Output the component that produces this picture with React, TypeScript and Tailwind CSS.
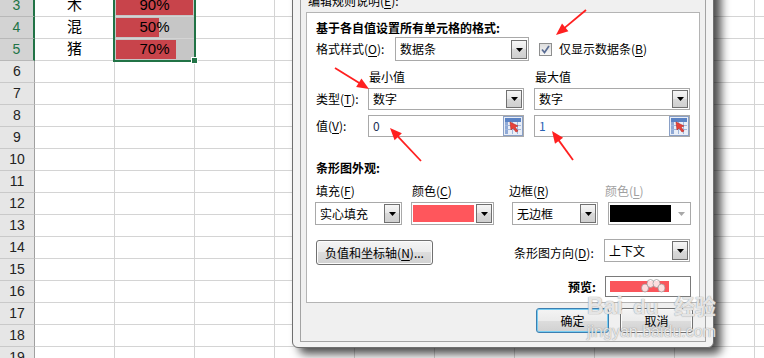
import React from 'react';

type Row = { name?: string; pct?: string; bar?: number };

const data: Record<number, Row> = {
  3: { name: '木', pct: '90%', bar: 77 },
  4: { name: '混', pct: '50%', bar: 43 },
  5: { name: '猪', pct: '70%', bar: 60 },
};

const rowNums = Array.from({ length: 17 }, (_, i) => i + 3);
const emptyCols = Array.from({ length: 8 }, (_, i) => i);

function Sheet() {
  return (
    <div className="flex flex-col -mt-[5px] font-['Liberation_Sans','Noto_Sans_CJK_SC',sans-serif]">
      {rowNums.map((r) => {
        const sel = r >= 3 && r <= 5;
        const d = data[r];
        return (
          <div key={r} className="flex h-[22px] shrink-0">
            <div
              className={`w-[35px] shrink-0 flex items-center justify-center border-b text-[14px] ${
                sel
                  ? 'bg-[#d3d3d3] text-[#217346] border-b-[#b8b8b8] border-r-2 border-r-[#217346]'
                  : 'bg-[#e6e6e6] text-[#222] border-b-[#c9c9c9] border-r border-r-[#a0a0a0]'
              }`}
            >
              {r}
            </div>
            <div className="w-[80px] shrink-0 border-r border-b border-[#d4d4d4] flex items-center justify-center text-[15px] text-black">
              {d?.name}
            </div>
            <div
              className={`relative w-[80px] shrink-0 border-r border-b border-[#d4d4d4] flex items-center justify-center text-[15px] text-black ${
                sel ? 'bg-[#c6c6c6]' : ''
              }`}
            >
              {d?.bar && (
                <div className="absolute left-[1px] top-[1px] bottom-[1px] bg-[#c8444b]" style={{ width: d.bar }} />
              )}
              {d?.pct && <span className="relative">{d.pct}</span>}
            </div>
            {emptyCols.map((c) => (
              <div key={c} className="w-[80px] shrink-0 border-r border-b border-[#d4d4d4]" />
            ))}
          </div>
        );
      })}
    </div>
  );
}

function Tri({ color = '#000' }: { color?: string }) {
  return (
    <svg width="7" height="4" viewBox="0 0 7 4">
      <polygon points="0,0 7,0 3.5,4" fill={color} />
    </svg>
  );
}

function DropBtn({ className }: { className: string }) {
  return (
    <div
      className={`shrink-0 flex items-center justify-center border border-[#707070] bg-[linear-gradient(#f6f6f6,#e6e6e6_50%,#d9d9d9_50%,#cfcfcf)] ${className}`}
    >
      <Tri />
    </div>
  );
}

function Combo({ className, text, btn }: { className: string; text: string; btn: string }) {
  return (
    <div className={`flex items-center justify-between border border-[#a9a9a9] bg-white pl-[4px] pr-[1px] ${className}`}>
      <span className="text-[12px] leading-none">{text}</span>
      <DropBtn className={btn} />
    </div>
  );
}

function RefEdit() {
  return (
    <svg width="20" height="20" viewBox="0 0 20 20">
      <rect x="0.5" y="0.5" width="19" height="19" fill="#e9eef7" stroke="#8aa0c6" />
      <rect x="2" y="2" width="16" height="4" fill="#5a82c4" />
      <rect x="2" y="6" width="3" height="12" fill="#8fa9d6" />
      <line x1="2" y1="9.5" x2="18" y2="9.5" stroke="#9fb6dc" />
      <line x1="2" y1="13.5" x2="18" y2="13.5" stroke="#9fb6dc" />
      <line x1="9.5" y1="6" x2="9.5" y2="18" stroke="#9fb6dc" />
      <line x1="14.5" y1="6" x2="14.5" y2="18" stroke="#9fb6dc" />
      <polygon points="7,6 15,10 12,11 15,15 13,16 10,12 8,14" fill="#e8413a" stroke="#b52a22" strokeWidth="0.6" />
    </svg>
  );
}

function ValueBox({ value, color }: { value: string; color: string }) {
  return (
    <div className="w-[156px] h-[22px] flex items-center justify-between border border-[#a9a9a9] bg-white pl-[4px] pr-[0px]">
      <span className={`text-[12px] leading-none ${color}`}>{value}</span>
      <RefEdit />
    </div>
  );
}

function U({ children }: { children: React.ReactNode }) {
  return <span className="underline underline-offset-[2px]">{children}</span>;
}

function WinBtn({ children, primary, className }: { children: React.ReactNode; primary?: boolean; className: string }) {
  return (
    <div
      className={`flex items-center justify-center rounded-[3px] border text-[12px] text-black bg-[linear-gradient(#f4f4f4,#ebebeb_50%,#dddddd_50%,#d1d1d1)] ${
        primary ? 'border-[#3c7fb1] shadow-[inset_0_0_0_1px_#78cdf2]' : 'border-[#707070] shadow-[inset_0_0_0_1px_#fcfcfc]'
      } ${className}`}
    >
      {children}
    </div>
  );
}

function Dialog() {
  return (
    <div className="absolute left-[292px] top-[-20px] w-[422px] h-[368px] flex flex-col border border-[#6f6f6f] rounded-b-[6px] bg-[#f3f3f3] px-[7px] pt-[7px] pb-[5px] shadow-[7px_6px_10px_rgba(0,0,0,0.7)] font-['Noto_Sans_CJK_SC','Liberation_Sans',sans-serif] text-black">
      <div className="flex-1 flex flex-col border border-[#a3a3a3] bg-[#f0f0f0]">
        <div className="mt-[4px] pl-[7px] h-[16px] leading-[16px] text-[12px]">
          编辑规则说明(<U>E</U>):
        </div>
        <div className="mt-[3px] mx-[5px] h-[291px] border border-[#b4b4b4] bg-white pl-[9px] flex flex-col text-[12px]">
          <div className="mt-[7px] h-[16px] leading-[16px] font-bold">基于各自值设置所有单元格的格式:</div>

          <div className="mt-[1px] h-[24px] flex items-center">
            <span className="w-[79px] shrink-0">
              格式样式(<U>O</U>):
            </span>
            <Combo className="w-[134px] h-[24px]" text="数据条" btn="w-[16px] h-[19px] mt-[1px]" />
            <div className="ml-[10px] w-[13px] h-[13px] border border-[#8e8f8f] bg-linear-to-b from-[#dedede] to-[#f7f7f7] flex items-center justify-center">
              <svg width="9" height="9" viewBox="0 0 9 9">
                <path d="M1 4.5 L3.5 7.5 L8 1" fill="none" stroke="#5a6d94" strokeWidth="1.7" />
              </svg>
            </div>
            <span className="ml-[7px]">
              仅显示数据条(<U>B</U>)
            </span>
          </div>

          <div className="mt-[8px] h-[16px] leading-[16px] flex">
            <span className="w-[53px] shrink-0" />
            <span className="w-[166px] shrink-0">最小值</span>
            <span>最大值</span>
          </div>

          <div className="mt-[3px] h-[22px] flex items-center">
            <span className="w-[52px] shrink-0">
              类型(<U>T</U>):
            </span>
            <Combo className="w-[156px] h-[22px]" text="数字" btn="w-[16px] h-[18px]" />
            <div className="w-[10px] shrink-0" />
            <Combo className="w-[156px] h-[22px]" text="数字" btn="w-[16px] h-[18px]" />
          </div>

          <div className="mt-[5px] h-[22px] flex items-center">
            <span className="w-[52px] shrink-0">
              值(<U>V</U>):
            </span>
            <ValueBox value="0" color="text-[#1c2f55]" />
            <div className="w-[10px] shrink-0" />
            <ValueBox value="1" color="text-[#2a62b4]" />
          </div>

          <div className="mt-[23px] h-[16px] leading-[16px] font-bold">条形图外观:</div>

          <div className="mt-[7px] h-[16px] leading-[16px] flex">
            <span className="w-[96px] shrink-0">
              填充(<U>F</U>)
            </span>
            <span className="w-[97px] shrink-0">
              颜色(<U>C</U>)
            </span>
            <span className="w-[96px] shrink-0">
              边框(<U>R</U>)
            </span>
            <span className="text-[#a0a0a0]">
              颜色(<U>L</U>)
            </span>
          </div>

          <div className="mt-[3px] h-[23px] flex items-center -ml-[1px]">
            <Combo className="w-[87px] h-[23px] shrink-0" text="实心填充" btn="w-[16px] h-[19px]" />
            <div className="w-[9px] shrink-0" />
            <div className="w-[83px] h-[23px] shrink-0 flex items-center border border-[#a9a9a9] bg-white px-[1px]">
              <div className="w-[61px] h-[17px] bg-[#ff565c]" />
              <DropBtn className="ml-[2px] w-[16px] h-[19px]" />
            </div>
            <div className="w-[18px] shrink-0" />
            <Combo className="w-[86px] h-[23px] shrink-0" text="无边框" btn="w-[16px] h-[19px]" />
            <div className="w-[10px] shrink-0" />
            <div className="w-[83px] h-[23px] shrink-0 flex items-center border border-[#a9a9a9] bg-white px-[1px]">
              <div className="w-[61px] h-[17px] bg-black" />
              <div className="ml-[2px] w-[16px] h-[19px] flex items-center justify-center">
                <Tri color="#a8a8a8" />
              </div>
            </div>
          </div>

          <div className="mt-[14px] h-[26px] flex items-start">
            <WinBtn className="mt-[1px] w-[117px] h-[25px]">
              负值和坐标轴(<U>N</U>)...
            </WinBtn>
            <span className="ml-[81px] mt-[6px] w-[90px] shrink-0 leading-[16px]">
              条形图方向(<U>D</U>):
            </span>
            <Combo className="w-[86px] h-[23px]" text="上下文" btn="w-[16px] h-[19px]" />
          </div>

          <div className="mt-[11px] h-[21px] flex items-center">
            <span className="w-[280px] shrink-0 text-right font-bold">预览:</span>
            <div className="ml-[9px] w-[86px] h-[21px] border border-[#7a7a7a] bg-white p-[4px] flex">
              <div className="w-[59px] h-full bg-[#fa555b]" />
            </div>
          </div>
        </div>

        <div className="mt-[5px] flex justify-end gap-[11px] pr-[12px]">
          <WinBtn primary className="w-[73px] h-[25px]">
            确定
          </WinBtn>
          <WinBtn className="w-[73px] h-[25px]">取消</WinBtn>
        </div>
      </div>
    </div>
  );
}

const arrows: [number, number, number, number][] = [
  [335, 68, 369, 89],
  [586, 10, 556, 35],
  [421, 161, 390, 128],
  [573, 160, 552, 131],
];

function head(x1: number, y1: number, x2: number, y2: number) {
  const L = 12;
  const W = 5;
  const dx = x2 - x1;
  const dy = y2 - y1;
  const len = Math.hypot(dx, dy);
  const ux = dx / len;
  const uy = dy / len;
  const bx = x2 - ux * L;
  const by = y2 - uy * L;
  return {
    pts: `${x2},${y2} ${bx - uy * W},${by + ux * W} ${bx + uy * W},${by - ux * W}`,
    bx: x2 - ux * (L - 2),
    by: y2 - uy * (L - 2),
  };
}

function Arrows() {
  return (
    <svg className="absolute left-0 top-0 pointer-events-none" width="764" height="358">
      {arrows.map(([x1, y1, x2, y2], i) => {
        const h = head(x1, y1, x2, y2);
        return (
          <g key={i}>
            <line x1={x1} y1={y1} x2={h.bx} y2={h.by} stroke="#ff2020" strokeWidth="1.8" />
            <polygon points={h.pts} fill="#ff2020" />
          </g>
        );
      })}
    </svg>
  );
}

function Watermark() {
  const txt = "text-[rgba(255,255,255,0.75)] [text-shadow:0_0_1px_rgba(140,140,140,0.7),0_0_1px_rgba(140,140,140,0.7)]";
  return (
    <div className="absolute left-[586px] top-[272px] w-[150px] h-[72px] pointer-events-none">
      <svg className="absolute left-[54px] top-[7px]" width="26" height="16" viewBox="0 0 26 16">
        <g fill="rgba(255,255,255,0.8)" stroke="rgba(150,150,150,0.7)" strokeWidth="1">
          <ellipse cx="5" cy="9" rx="3.5" ry="4" />
          <ellipse cx="10.5" cy="4.5" rx="3.5" ry="4" />
          <ellipse cx="16.5" cy="4.5" rx="3.5" ry="4" />
          <ellipse cx="21.5" cy="9" rx="3.5" ry="4" />
        </g>
      </svg>
      <div className={`absolute left-[1px] top-[21px] text-[23px] leading-[26px] font-bold font-['Liberation_Sans',sans-serif] ${txt}`}>
        Bai
      </div>
      <div className={`absolute left-[47px] top-[23px] text-[21px] leading-[24px] font-bold font-['Liberation_Sans',sans-serif] ${txt}`}>
        du
      </div>
      <div className={`absolute left-[88px] top-[20px] text-[21px] leading-[26px] font-bold font-['Noto_Sans_CJK_SC',sans-serif] ${txt}`}>
        经验
      </div>
      <div className={`absolute left-[1px] top-[51px] text-[16px] leading-[18px] font-['Liberation_Sans',sans-serif] ${txt}`}>
        jingyan.baidu.com
      </div>
    </div>
  );
}

export default function App() {
  return (
    <div className="relative w-[764px] h-[358px] overflow-hidden bg-white">
      <Sheet />
      <div className="absolute left-[113px] top-[-10px] w-[83px] h-[72px] border-2 border-[#217346]" />
      <div className="absolute left-[191px] top-[57px] w-[7px] h-[7px] bg-[#217346] border border-white" />
      <Dialog />
      <Arrows />
      <Watermark />
    </div>
  );
}
